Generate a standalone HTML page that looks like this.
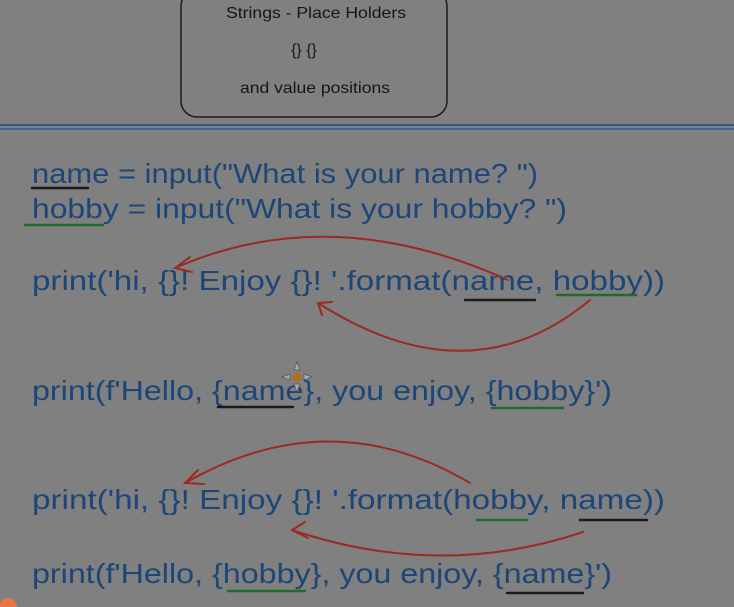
<!DOCTYPE html>
<html><head><meta charset="utf-8"><style>
html,body{margin:0;padding:0;background:#808080;width:734px;height:607px;overflow:hidden}
svg{display:block}
</style></head><body>
<svg width="734" height="607" viewBox="0 0 734 607" xmlns="http://www.w3.org/2000/svg">
<rect width="734" height="607" fill="#808080"/>
<rect x="181" y="-10" width="266" height="127" rx="16" fill="none" stroke="#1c1c1c" stroke-width="1.5"/>
<g font-family="Liberation Sans, sans-serif" fill="#151515" font-size="16" text-anchor="middle">
<text x="316" y="18" textLength="180" lengthAdjust="spacingAndGlyphs">Strings - Place Holders</text>
<text x="304" y="55">{} {}</text>
<text x="315" y="93" textLength="150" lengthAdjust="spacingAndGlyphs">and value positions</text>
</g>
<line x1="0" y1="125" x2="734" y2="125" stroke="#2d5a94" stroke-width="2"/>
<line x1="0" y1="129" x2="734" y2="129" stroke="#2d5a94" stroke-width="1.5"/>
<g font-family="Liberation Sans, sans-serif" fill="#1d4678" font-size="28">
<text x="32" y="183" textLength="506" lengthAdjust="spacingAndGlyphs">name = input("What is your name? ")</text>
<text x="32" y="218" textLength="535" lengthAdjust="spacingAndGlyphs">hobby = input("What is your hobby? ")</text>
<text x="32" y="290" textLength="633" lengthAdjust="spacingAndGlyphs">print('hi, {}! Enjoy {}! '.format(name, hobby))</text>
<text x="32" y="400" textLength="580" lengthAdjust="spacingAndGlyphs">print(f'Hello, {name}, you enjoy, {hobby}')</text>
<text x="32" y="509" textLength="633" lengthAdjust="spacingAndGlyphs">print('hi, {}! Enjoy {}! '.format(hobby, name))</text>
<text x="32" y="583" textLength="580" lengthAdjust="spacingAndGlyphs">print(f'Hello, {hobby}, you enjoy, {name}')</text>
</g>
<g stroke-width="2.5" fill="none" stroke-linecap="round">
<line x1="32" y1="188" x2="88" y2="188" stroke="#1a1a1a"/>
<line x1="25" y1="225" x2="103" y2="225" stroke="#1f6b2c"/>
<line x1="465" y1="300" x2="535" y2="300" stroke="#1a1a1a"/>
<line x1="557" y1="295" x2="636" y2="295" stroke="#1f6b2c"/>
<line x1="218" y1="407" x2="293" y2="407" stroke="#1a1a1a"/>
<line x1="492" y1="408" x2="563" y2="408" stroke="#1f6b2c"/>
<line x1="477" y1="520" x2="527" y2="520" stroke="#1f6b2c"/>
<line x1="580" y1="520" x2="647" y2="520" stroke="#1a1a1a"/>
<line x1="228" y1="591" x2="305" y2="591" stroke="#1f6b2c"/>
<line x1="507" y1="593" x2="583" y2="593" stroke="#1a1a1a"/>
</g>
<g stroke="#9b2a22" stroke-width="2" fill="none" stroke-linecap="round">
<path d="M508 280 Q330 200 175 268"/><path d="M190 257 L175 268 L192 272"/>
<path d="M590 300 Q470 400 318 303"/><path d="M322 315 L318 303 L332 302"/>
<path d="M470 483 Q330 400 185 483"/><path d="M198 470 L185 483 L204 484"/>
<path d="M583 532 Q440 580 292 530"/><path d="M305 522 L292 530 L308 538"/>
</g>
<circle cx="297" cy="377" r="4" fill="#c06a10"/>
<path d="M297 362 l-3 8 h6z M297 392 l-3 -8 h6z M282 377 l8 -3 v6z M312 377 l-8 -3 v6z" fill="#aaa" stroke="#555" stroke-width="0.7"/>
<circle cx="8" cy="607" r="9" fill="#e8744a"/>
</svg>
</body></html>
